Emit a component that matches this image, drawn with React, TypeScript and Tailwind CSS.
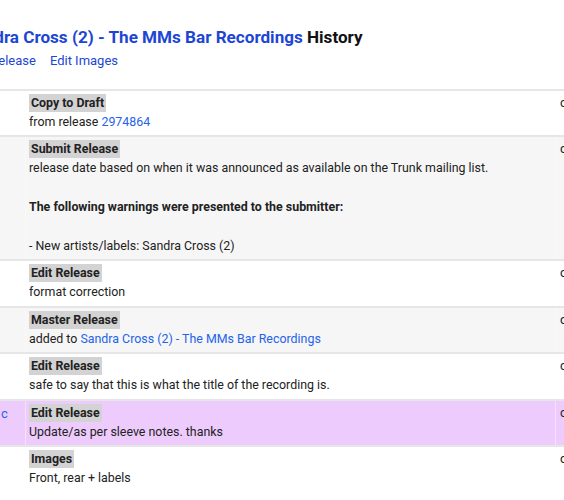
import React from "react";

type Row = {
  label: string;
  lines: React.ReactNode[];
  bg: string;
  left?: string;
};

const link = "text-[#2563eb]";

const rows: Row[] = [
  {
    label: "Copy to Draft",
    lines: [
      <>
        from release <span className={link}>2974864</span>
      </>,
    ],
    bg: "bg-white",
  },
  {
    label: "Submit Release",
    lines: [
      "release date based on when it was announced as available on the Trunk mailing list.",
      "\u00a0",
      <span className="font-bold">The following warnings were presented to the submitter:</span>,
      "\u00a0",
      "- New artists/labels: Sandra Cross (2)",
    ],
    bg: "bg-[#f6f6f6]",
  },
  { label: "Edit Release", lines: ["format correction"], bg: "bg-white" },
  {
    label: "Master Release",
    lines: [
      <>
        added to <span className={link}>Sandra Cross (2) - The MMs Bar Recordings</span>
      </>,
    ],
    bg: "bg-[#f6f6f6]",
  },
  {
    label: "Edit Release",
    lines: ["safe to say that this is what the title of the recording is."],
    bg: "bg-white",
  },
  {
    label: "Edit Release",
    lines: ["Update/as per sleeve notes. thanks"],
    bg: "bg-[#eecbfd]",
    left: "c",
  },
  { label: "Images", lines: ["Front, rear + labels"], bg: "bg-white" },
];

export default function App() {
  return (
    <div
      className="w-full h-[500px] overflow-hidden bg-white text-[#222]"
      style={{ fontFamily: "Roboto, 'Liberation Sans', Arial, sans-serif" }}
    >
      <div className="ml-[-35px] pt-[25px] whitespace-nowrap">
        <h1 className="text-[17.1px] leading-[24px] font-bold">
          <span className="text-[#1d46d4]">Sandra Cross (2) - The MMs Bar Recordings</span>{" "}
          <span className="text-[#111]">History</span>
        </h1>
        <div className="mt-[2px] flex gap-[14px] text-[13px] leading-[20px] text-[#1d46d4]">
          <span>Edit Release</span>
          <span>Edit Images</span>
        </div>
      </div>
      <div className="mt-[18px] w-[640px] text-[12.4px]">
        {rows.map((r, i) => (
          <div
            key={i}
            className={`grid grid-cols-[26px_529px_1fr] border-t-2 border-[#e6e6e6] ${r.bg}`}
          >
            <div className="border-r border-white/40 pt-[4px] leading-[18px] text-[#2563eb] overflow-hidden text-[13px]">
              {r.left ? <span className="pl-[1px]">{r.left}</span> : null}
            </div>
            <div className="pl-[3px] pt-[3px] pb-[4px]">
              <div className="leading-[18px]">
                <span className="inline-block bg-[#d3d3d3] px-[2px] font-bold">{r.label}</span>
              </div>
              {r.lines.map((l, j) => (
                <div key={j} className="leading-[19.4px]">
                  {l}
                </div>
              ))}
            </div>
            <div className="border-l border-white/40 pl-[4px] pt-[3px] leading-[18px] whitespace-nowrap text-[13px]">
              c
            </div>
          </div>
        ))}
      </div>
    </div>
  );
}
